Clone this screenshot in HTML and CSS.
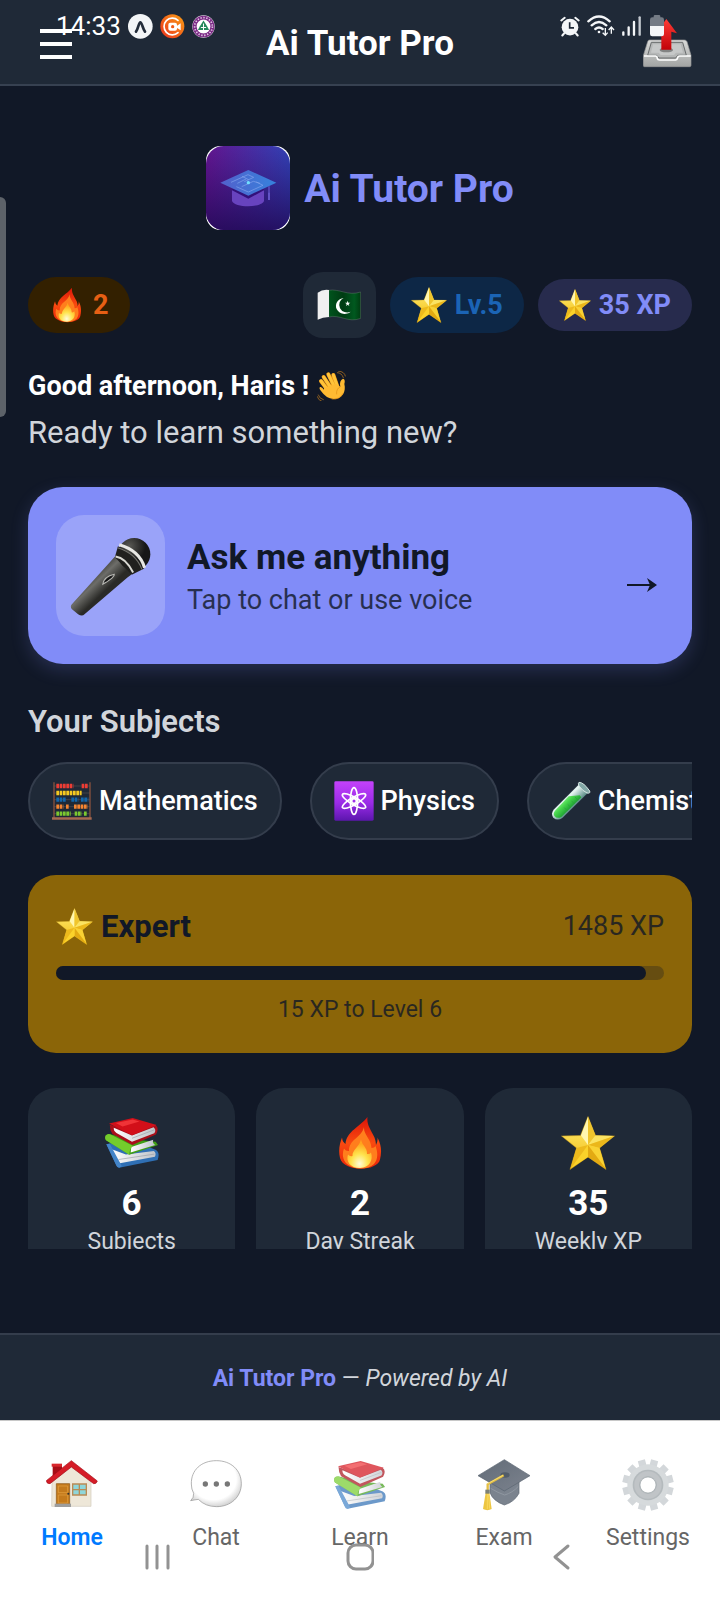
FILE: index.html
```
<!DOCTYPE html>
<html lang="en">
<head>
  <meta charset="UTF-8" />
  <meta name="viewport" content="width=device-width, initial-scale=1.0" />
  <title>Ai Tutor Pro</title>
  <link rel="stylesheet" href="styles.css">
</head>
<body>

  <!-- Shared icons -->
  <svg class="sprite" aria-hidden="true">
    <defs>
      <linearGradient id="gold" x1="0" y1="0" x2="0" y2="1"><stop offset="0" stop-color="#fff07a" /><stop offset="1" stop-color="#f2b90c" /></linearGradient>
      <linearGradient id="flame" x1="0" y1="0" x2="0" y2="1"><stop offset="0" stop-color="#dc1408" /><stop offset=".5" stop-color="#f94a10" /><stop offset="1" stop-color="#e8240a" /></linearGradient>
      <radialGradient id="core" cx=".5" cy=".85" r=".7"><stop offset="0" stop-color="#fffbd8" /><stop offset=".5" stop-color="#ffe34d" /><stop offset="1" stop-color="#ffa61c" /></radialGradient>
      <linearGradient id="page" x1="0" y1="0" x2="1" y2="0"><stop offset="0" stop-color="#ffffff" /><stop offset="1" stop-color="#bfc3c9" /></linearGradient>
    </defs>
    <symbol id="star" viewBox="0 0 108 108">
      <path fill="url(#gold)" stroke="#c4961a" stroke-width="1" d="M54 1 69 39 107 40 77 64 90 107 54 82 18 107 31 64 1 40 39 39z" />
      <path fill="#fff6b0" d="M54 2V58L40 39z" />
      <path fill="#f0c52c" d="M54 2 69 39 54 58z" />
      <path fill="#fbe362" d="M69 39 106 40 54 58z" />
      <path fill="#ebb71a" d="M106 40 77 64 54 58z" />
      <path fill="#f9d233" d="M77 64 89 105 54 58z" />
      <path fill="#e3aa12" d="M89 105 54 82V58z" />
      <path fill="#fbd22a" d="M54 82 19 105 54 58z" />
      <path fill="#edba1c" d="M19 105 31 64 54 58z" />
    </symbol>
    <symbol id="fire" viewBox="0 0 108 108">
      <path fill="url(#flame)" d="M69 2C67 18 76 28 83 43Q86 51 86 58Q90 50 89 43C98 60 97 74 94 87C88 112 21 112 14 84C10 68 14 54 18 43Q19 52 25 56C27 30 54 22 69 2z" />
      <path fill="#ff7e1d" d="M62 22C61 38 76 45 77 64Q83 64 85 60C91 76 89 88 82 96C68 110 36 107 25 93C18 83 19 73 22 65Q26 71 32 70C32 46 57 44 62 22z" />
      <path fill="url(#core)" d="M56 47C58 59 69 63 68 76Q73 77 76 73C81 87 73 104 54 104C35 104 25 91 30 77Q34 82 39 80C38 68 53 61 56 47z" />
    </symbol>
    <symbol id="books" viewBox="0 0 160 156">
      <path fill="#2f6fb4" d="M4 82 68 66 150 98Q164 106 156 128L42 151Q38 151 34 144z" />
      <path fill="url(#page)" d="M18 96 44 138 148 119Q153 109 145 102L62 112z" />
      <path fill="none" stroke="#9aa0a8" stroke-width="2" d="M40 127 146 111" />
      <path fill="#4384c8" d="M4 82 14 80 50 147 42 151Q35 151 33 144z" />
      <path fill="#3f9e15" d="M2 56Q7 50 15 52L80 67 150 74 157 84 72 113 3 70Q-1 64 2 56z" />
      <path fill="url(#page)" d="M78 90 143 68Q139 77 149 84L76 106z" />
      <path fill="#74cc2c" d="M2 56Q7 50 15 52L82 86Q72 98 72 113L3 70Q-2 64 2 56z" />
      <path fill="#a90f1a" d="M14 23 82 47 149 24Q162 34 151 53L81 84 22 51Q14 40 14 23z" />
      <path fill="url(#page)" d="M26 33 80 56 144 31Q153 39 146 49L80 74 34 48Q25 43 26 33z" />
      <path fill="none" stroke="#9da3a9" stroke-width="2" d="M80 64 146 39" />
      <path fill="#d20f19" d="M12 20 82 4 153 25 80 55z" />
      <path fill="#ef3337" d="M32 19 82 8 102 14 52 29z" />
    </symbol>
  </svg>

  <div class="status-bar">
    <div class="status-group">
      <span class="clock">14:33</span>
      <svg width="25" height="25" viewBox="0 0 75 75"><circle cx="37" cy="37" r="37" fill="#f3f5f7" /><path fill="none" stroke="#232c3a" stroke-width="8" stroke-linecap="round" d="M24 53C31 44 32 25 37 25S44 44 51 53" /></svg>
      <svg width="25" height="25" viewBox="0 0 75 75">
        <linearGradient id="rec" x1="1" y1="0" x2="0" y2="1"><stop offset="0" stop-color="#fba015" /><stop offset="1" stop-color="#ea2f1c" /></linearGradient>
        <circle cx="37" cy="37" r="36" fill="url(#rec)" />
        <path fill="none" stroke="#fff" stroke-width="5" stroke-linecap="round" d="M54 19A25 25 0 1 0 54 56" />
        <rect x="25" y="26" width="26" height="24" rx="6" fill="#fff" /><path fill="#fff" d="M50 36 62 28V49L50 41z" /><circle cx="38" cy="38" r="5" fill="#ef5a18" />
      </svg>
      <svg width="23" height="23" viewBox="0 0 70 70">
        <circle cx="35" cy="35" r="34" fill="#f2e8f3" /><circle cx="35" cy="35" r="27" fill="none" stroke="#7c2c86" stroke-width="12" /><circle cx="35" cy="35" r="27" fill="none" stroke="#e6cfe9" stroke-width="5" stroke-dasharray="4 5" />
        <path fill="#fff" d="M15 35a20 20 0 1 1 40 0a20 20 0 1 1-40 0" /><path fill="#24885b" d="M35 17 46 34 52 46H18L24 34z" /><path stroke="#fff" stroke-width="3" d="M35 26V48M27 38H43" />
      </svg>
    </div>
    <div class="status-group status-right">
      <svg width="20" height="21" viewBox="0 0 60 62"><circle cx="30" cy="33" r="25" fill="#f4f6f8" /><path fill="none" stroke="#f4f6f8" stroke-width="6" stroke-linecap="round" d="M4 13 14 5M56 13 46 5M12 52 7 58M48 52 53 58" /><path fill="none" stroke="#1f2937" stroke-width="5" d="M29 18V35H42" /></svg>
      <svg width="28" height="22" viewBox="0 0 84 66">
        <g fill="none" stroke="#f4f6f8" stroke-width="7" stroke-linecap="round"><path d="M4 19Q36-10 68 19M14 31Q36 11 58 31M25 42Q36 33 47 42" /></g>
        <circle cx="36" cy="51" r="4" fill="#f4f6f8" /><path fill="none" stroke="#f4f6f8" stroke-width="4" d="M55 39V60M47 53 55 61 62 53M73 56V37M65 45 73 36 81 45" />
      </svg>
      <svg width="19" height="20" viewBox="0 0 57 60"><path fill="none" stroke="#f4f6f8" stroke-width="7" stroke-linecap="round" d="M4 49V56M20 34V56M36 18V56" /><path fill="none" stroke="#c5cad1" stroke-width="7" stroke-linecap="round" d="M53 4V56" /></svg>
      <svg class="battery" width="14" height="22" viewBox="0 0 42 66"><path fill="#747b85" d="M11 4Q11 0 15 0H27Q31 0 31 4V7H35Q42 7 42 14V34H0V14Q0 7 7 7H11z" /><path fill="#f4f6f8" d="M0 33H42V57Q42 64 35 64H7Q0 64 0 57z" /></svg>
    </div>
  </div>

  <header class="app-header">
    <button class="menu-btn" aria-label="Open menu"><span></span><span></span><span></span></button>
    <h1>Ai Tutor Pro</h1>
    <button class="share-btn" aria-label="Share">
      <svg width="49" height="49" viewBox="0 0 147 147">
        <linearGradient id="tray" x1="0" y1="0" x2="0" y2="1"><stop offset="0" stop-color="#d9dad9" /><stop offset="1" stop-color="#a2a4a3" /></linearGradient>
        <linearGradient id="up" x1="0" y1="0" x2="0" y2="1"><stop offset="0" stop-color="#ff3c35" /><stop offset="1" stop-color="#c20309" /></linearGradient>
        <path fill="url(#tray)" stroke="#999" stroke-width="2" d="M20 63H124Q130 63 132 68L144 109V139Q144 143 140 143H4Q1 143 1 139V110L14 68Q15 63 20 63z" />
        <path fill="#b5b7b7" stroke="#686b6c" stroke-width="3" d="M25 70H119L130 109H104L98 117H48L41 109H14z" />
        <path fill="#d8d9d9" d="M30 76H113L120 101H99L93 108H53L47 101H24z" opacity=".5" />
        <path fill="none" stroke="#fff" stroke-width="5" d="M3 111H38Q43 112 43 119Q44 123 49 123H98Q103 122 104 116Q105 111 110 111H143" />
        <ellipse cx="70" cy="93" rx="20" ry="7" fill="#555" opacity=".6" />
        <path fill="url(#up)" d="M70 0 102 43 85 38V92H55V38L39 43z" />
      </svg>
    </button>
  </header>

  <main class="scroll-area">
    <div class="brand">
      <svg width="84" height="84" viewBox="0 0 252 252">
        <linearGradient id="app" x1="0" y1="0" x2="1" y2="0"><stop offset="0" stop-color="#64158f" /><stop offset="1" stop-color="#3142b5" /></linearGradient>
        <linearGradient id="dark" x1="0" y1="0" x2="0" y2="1"><stop offset="0" stop-color="#260a60" stop-opacity="0" /><stop offset="1" stop-color="#200955" stop-opacity=".85" /></linearGradient>
        <linearGradient id="hat" x1="0" y1="0" x2="1" y2="0"><stop offset="0" stop-color="#5360cc" /><stop offset="1" stop-color="#3682dc" /></linearGradient>
        <rect width="252" height="252" rx="44" fill="#fff" />
        <rect width="252" height="252" rx="53" fill="url(#app)" /><rect width="252" height="252" rx="53" fill="url(#dark)" />
        <path fill="#6843bf" d="M78 129 127 151 174 129V165C166 186 86 186 78 165z" />
        <path fill="#33117a" d="M78 133 127 158 174 133V129H78z" />
        <path fill="url(#hat)" d="M43 110 127 72 211 110 127 149z" />
        <path fill="none" stroke="#83a5ed" stroke-width="2" d="M75 109 126 86 143 94 115 107M94 112 120 99M107 122 142 106 162 112M91 122 127 138 171 118 151 108M108 91 128 101" />
        <circle cx="127" cy="110" r="5" fill="#72dfff" />
        <path fill="none" stroke="#6253c6" stroke-width="4" d="M189 121V158" /><path stroke="#6253c6" stroke-width="6" d="M189 140V162" />
      </svg>
      <h2>Ai Tutor Pro</h2>
    </div>

    <div class="badges">
      <div class="pill streak"><svg width="36" height="36"><use href="#fire" /></svg><span>2</span></div>
      <div class="badges-right">
        <button class="flag-btn" aria-label="Country: Pakistan">
          <svg width="44" height="32" viewBox="0 0 132 96">
            <linearGradient id="cloth" x1="0" y1="0" x2="1" y2="0"><stop offset="0" stop-color="#00541d" /><stop offset=".45" stop-color="#003b13" /><stop offset=".8" stop-color="#00591f" /><stop offset="1" stop-color="#003c11" /></linearGradient>
            <path fill="url(#cloth)" stroke="#849189" stroke-width="1" d="M35 4C66-2 93 22 131 9V88C94 103 69 75 35 84z" />
            <path fill="#f0f0f0" d="M2 11Q17 0 36 3V84Q17 84 2 92z" />
            <path fill="#fff" d="M80 27A26 24 0 1 0 101 68A23 22 0 1 1 80 27z" /><path fill="#fff" d="M92 35 94 41 100 41 95 45 97 51 92 47 87 51 89 45 84 41 90 41z" />
          </svg>
        </button>
        <div class="pill level"><svg width="36" height="36"><use href="#star" /></svg><span>Lv.5</span></div>
        <div class="pill xp"><svg width="32" height="32"><use href="#star" /></svg><span>35 XP</span></div>
      </div>
    </div>

    <p class="greeting">Good afternoon, Haris !
      <svg width="30" height="30" viewBox="0 0 90 90">
        <path fill="none" stroke="#8c5d20" stroke-width="3" stroke-linecap="round" d="M61 5Q74 5 79 20M64 0Q83 2 85 15M4 72Q7 83 19 86M1 77Q4 88 13 90" />
        <g stroke="#e79519" stroke-width="12" stroke-linecap="round"><path d="M12 30 35 61M20 18 43 53M34 10 52 47M49 12 61 46" /></g>
        <g stroke="#ffc339" stroke-width="9" stroke-linecap="round"><path d="M12 30 35 61M20 18 43 53M34 10 52 47M49 12 61 46" /></g>
        <path fill="#ffba32" d="M21 50 57 38 70 47Q66 29 78 23Q86 25 82 39C88 61 76 85 49 84Q28 83 12 60Q5 52 9 48Q14 46 21 56z" /><path fill="none" stroke="#df8c13" stroke-width="2" d="M70 47Q57 54 59 70M44 84Q68 87 78 67" />
      </svg>
    </p>
    <p class="subtitle">Ready to learn something new?</p>

    <button class="ask-card">
      <span class="ask-icon">
        <svg width="81" height="81" viewBox="0 0 240 240">
          <linearGradient id="body" gradientUnits="userSpaceOnUse" x1="66" y1="110" x2="112" y2="158"><stop offset="0" stop-color="#363632" /><stop offset=".45" stop-color="#6d6d69" /><stop offset="1" stop-color="#2a2a27" /></linearGradient>
          <radialGradient id="ball" cx=".35" cy=".25"><stop offset="0" stop-color="#595954" /><stop offset="1" stop-color="#171717" /></radialGradient>
          <path fill="url(#body)" d="M136 61 186 109Q183 119 171 125L43 235Q36 242 24 235L5 219Q0 212 5 206z" />
          <circle cx="190" cy="57" r="48" fill="url(#ball)" />
          <path fill="#20201e" d="M142 33Q180 48 220 99L183 118 133 66z" />
          <path fill="none" stroke="#e8e8e4" stroke-width="9" d="M146 29Q206 46 221 97" /><path fill="none" stroke="#73736e" stroke-width="3" d="M141 38Q196 55 213 102" />
          <path fill="none" stroke="#d8d8d3" stroke-width="6" d="M135 64Q165 68 187 111" />
          <path fill="#222" stroke="#b7b7b2" stroke-width="3" d="M97 146Q100 123 131 116Q134 125 97 146z" /><path fill="none" stroke="#111" stroke-width="3" d="M105 137 122 124" />
        </svg>
      </span>
      <span class="ask-text"><strong>Ask me anything</strong><small>Tap to chat or use voice</small></span>
      <svg class="ask-arrow" width="30" height="16" viewBox="0 0 30 16"><path fill="none" stroke="#111827" stroke-width="2" d="M0 8H26" /><path fill="#111827" d="M20 1 30 8 20 15 23 8z" /></svg>
    </button>

    <h3>Your Subjects</h3>
    <div class="subjects">
      <button class="chip">
        <svg width="40" height="40" viewBox="0 0 120 120">
          <path fill="none" stroke="#87523e" stroke-width="4" d="M6 4V112M114 4V112" /><path fill="#a76950" d="M0 109H119V116H0z" />
          <path stroke="#8c7469" stroke-width="1" d="M7 15H113M7 36H113M7 56H113M7 77H113M7 98H113" />
          <g fill="none" stroke-width="13"><path stroke="#ed3c34" stroke-dasharray="8 2" d="M13 15H64M89 15H109" /><path stroke="#f5c921" stroke-dasharray="8 2" d="M13 36H89" /><path stroke="#1267ac" stroke-dasharray="8 2" d="M13 56H43M58 56H79M87 56H109" /><path stroke="#f58430" stroke-dasharray="8 2" d="M13 77H34M42 77H52M66 77H107" /><path stroke="#7bc92f" stroke-dasharray="8 2" d="M13 98H56M68 98H89M96 98H106" /></g>
        </svg>Mathematics
      </button>
      <button class="chip">
        <svg width="40" height="40" viewBox="0 0 120 120">
          <linearGradient id="violet" x1="0" y1="0" x2="0" y2="1"><stop offset="0" stop-color="#c442fa" /><stop offset=".55" stop-color="#9a2be7" /><stop offset="1" stop-color="#5c16ae" /></linearGradient>
          <rect x="1" y="1" width="118" height="118" rx="4" fill="url(#violet)" />
          <g fill="none" stroke="#fff" stroke-width="5"><ellipse cx="60" cy="60" rx="11" ry="40" /><ellipse cx="60" cy="60" rx="11" ry="40" transform="rotate(60 60 60)" /><ellipse cx="60" cy="60" rx="11" ry="40" transform="rotate(-60 60 60)" /><circle cx="60" cy="60" r="7" /></g>
        </svg>Physics
      </button>
      <button class="chip">
        <svg width="40" height="40" viewBox="0 0 120 120">
          <linearGradient id="glass" gradientUnits="userSpaceOnUse" x1="35" y1="45" x2="68" y2="78"><stop offset="0" stop-color="#a9c7c4" /><stop offset=".3" stop-color="#e9f7f4" /><stop offset="1" stop-color="#5c8d87" /></linearGradient>
          <linearGradient id="juice" gradientUnits="userSpaceOnUse" x1="28" y1="54" x2="58" y2="84"><stop offset="0" stop-color="#9cff9b" /><stop offset=".5" stop-color="#47d64c" /><stop offset="1" stop-color="#1b9f31" /></linearGradient>
          <path fill="url(#glass)" d="M85 9 111 35 34 111Q19 121 7 110Q-2 97 9 85z" />
          <path fill="url(#juice)" d="M53 46 86 43 91 49 31 108Q18 114 11 106Q5 98 12 89z" />
          <path stroke="#2b9f3b" stroke-width="2" d="M72 48 82 58M61 59 71 69M50 70 60 80M40 80 50 90" />
          <path fill="#82a7a5" stroke="#d6e5e3" stroke-width="3" d="M84 4Q98 4 116 30Q119 38 108 36Q95 30 84 15Q80 7 84 4z" />
        </svg>Chemistry
      </button>
    </div>

    <section class="level-card">
      <div class="level-top">
        <strong><svg width="37" height="37"><use href="#star" /></svg>Expert</strong>
        <span>1485 XP</span>
      </div>
      <div class="progress" role="progressbar" aria-label="Level progress" aria-valuenow="97" aria-valuemin="0" aria-valuemax="100"><div class="progress-fill" style="width: 97%"></div></div>
      <p>15 XP to Level 6</p>
    </section>

    <div class="stats">
      <div class="stat"><svg width="54" height="54"><use href="#books" /></svg><strong>6</strong><span>Subjects</span></div>
      <div class="stat"><svg width="54" height="54"><use href="#fire" /></svg><strong>2</strong><span>Day Streak</span></div>
      <div class="stat"><svg width="54" height="54"><use href="#star" /></svg><strong>35</strong><span>Weekly XP</span></div>
    </div>
  </main>
  <div class="scroll-handle"></div>

  <footer><strong>Ai Tutor Pro</strong> — <em>Powered by AI</em></footer>

  <nav class="tabs">
    <a href="#home" class="active">
      <svg width="52" height="52" viewBox="0 0 156 156">
        <path fill="#a70d17" d="M20 18H48V54H20z" /><path fill="#d8272d" d="M17 14H48V23H17z" />
        <path fill="#eee7d8" stroke="#d2cabb" stroke-width="2" d="M18 70 76 22 135 70V142H17z" />
        <path fill="#c47a1c" stroke="#8a5312" stroke-width="2" d="M31 74H71V136H31z" /><path fill="none" stroke="#e5a342" stroke-width="2" d="M37 81H65V101H37zM37 108H65V132H37z" /><circle cx="67" cy="104" r="3" fill="#333" />
        <path fill="#8ed6da" stroke="#b98b54" stroke-width="4" d="M80 75H121V108H80zM100 75V108M80 92H121" />
        <path fill="#9d9d9d" d="M26 134H75V144H26z" />
        <path fill="#d51c27" stroke="#a50d17" stroke-width="2" d="M76 5 154 66Q151 76 143 74L76 24 12 74Q2 75 1 65z" />
      </svg>
      <span>Home</span>
    </a>
    <a href="#chat">
      <svg width="52" height="52" viewBox="0 0 156 156">
        <radialGradient id="bubble" cx=".45" cy=".4" r=".6"><stop offset=".75" stop-color="#fff" /><stop offset="1" stop-color="#d5d5d5" /></radialGradient>
        <path fill="url(#bubble)" stroke="#8f8f8f" stroke-width="2" d="M4 75C3 33 34 5 79 5S154 34 154 74S122 143 80 143Q46 143 25 121Q17 122 2 125Q12 116 11 103Q4 91 4 75z" />
        <g fill="#777"><circle cx="46" cy="75" r="8" /><circle cx="79" cy="75" r="8" /><circle cx="112" cy="75" r="8" /></g>
      </svg>
      <span>Chat</span>
    </a>
    <a href="#learn"><svg class="faded" width="52" height="52"><use href="#books" /></svg><span>Learn</span></a>
    <a href="#exam">
      <svg width="52" height="52" viewBox="0 0 156 156">
        <linearGradient id="cap" x1="0" y1="0" x2="1" y2="1"><stop offset="0" stop-color="#626b77" /><stop offset="1" stop-color="#7c838e" /></linearGradient>
        <path fill="#7b838e" stroke="#5b6470" stroke-width="2" d="M36 64 80 87 123 64V103Q109 129 79 138Q45 126 36 101z" />
        <path fill="none" stroke="#98a0a9" stroke-width="2" d="M38 88Q61 102 80 108Q104 101 121 82" />
        <path fill="url(#cap)" stroke="#596370" stroke-width="2" d="M0 50 79 2 156 50 79 96z" />
        <ellipse cx="81" cy="48" rx="14" ry="8" fill="#515c69" />
        <path fill="none" stroke="#e3bd43" stroke-width="7" d="M77 49 29 76V101" /><path fill="none" stroke="#ffed8a" stroke-width="2" d="M75 49 29 74" />
        <path fill="#edc642" d="M23 101H34L41 150Q28 157 15 150z" /><path fill="#7d8177" d="M22 92H35V104H22z" /><path stroke="#ffe36c" stroke-width="2" d="M28 105V150M32 105 35 149" />
      </svg>
      <span>Exam</span>
    </a>
    <a href="#settings">
      <svg width="52" height="52" viewBox="0 0 156 156">
        <g stroke="#d3d7da" stroke-width="22"><path d="M78 1V155M1 78H155" transform="rotate(15 78 78)" /><path d="M78 1V155M1 78H155" transform="rotate(45 78 78)" /><path d="M78 1V155M1 78H155" transform="rotate(75 78 78)" /></g>
        <circle cx="78" cy="78" r="62" fill="#d6dadc" /><circle cx="78" cy="78" r="46" fill="#b4babd" /><circle cx="78" cy="78" r="34" fill="none" stroke="#c0c4c7" stroke-width="14" /><circle cx="78" cy="78" r="24" fill="#fff" stroke="#9fa6ab" stroke-width="2" />
      </svg>
      <span>Settings</span>
    </a>
  </nav>

  <div class="system-nav">
    <button aria-label="Recent apps"><svg width="28" height="28" viewBox="0 0 28 28"><path stroke="#929292" stroke-width="3" stroke-linecap="round" d="M4 3V25M14 3V25M25 3V25" /></svg></button>
    <button aria-label="Home screen"><svg width="28" height="28" viewBox="0 0 28 28"><rect x="2" y="2" width="25" height="24" rx="8" fill="none" stroke="#929292" stroke-width="3" /></svg></button>
    <button aria-label="Back"><svg width="28" height="28" viewBox="0 0 28 28"><path fill="none" stroke="#929292" stroke-width="3" stroke-linecap="round" stroke-linejoin="round" d="M19 3 6 14 19 25" /></svg></button>
  </div>

</body>
</html>
```
FILE: styles.css
```
* {
  box-sizing: border-box;
}

body {
  font-family: Roboto, sans-serif;
  background-color: #111827;
  color: #fff;
  margin: 0;
  height: 100vh;
  display: flex;
  flex-direction: column;
  position: relative;
}

h1, h2, h3, p {
  margin: 0;
}

button {
  font-family: inherit;
  color: inherit;
  background: none;
  border: none;
  padding: 0;
  cursor: pointer;
}

svg {
  display: block;
  flex-shrink: 0;
}

.sprite {
  position: absolute;
  width: 0;
  height: 0;
}

/* Phone status bar, drawn over the header */
.status-bar {
  position: absolute;
  top: 0;
  left: 0;
  right: 0;
  height: 52px;
  padding: 0 56px;
  display: flex;
  justify-content: space-between;
  align-items: center;
  pointer-events: none;
  z-index: 2;
}

.status-group {
  display: flex;
  align-items: center;
  gap: 7px;
}

.clock {
  font-size: 26px;
}

.battery {
  margin-left: 2px;
}

.app-header {
  height: 86px;
  flex-shrink: 0;
  padding: 3px 28px 0;
  display: flex;
  justify-content: space-between;
  align-items: center;
  background-color: #1f2937;
  border-bottom: 2px solid #374151;
}

.app-header h1 {
  font-size: 35px;
  font-weight: 700;
}

.menu-btn,
.share-btn {
  width: 56px;
  height: 56px;
  display: flex;
}

.menu-btn {
  padding: 0 12px;
  flex-direction: column;
  justify-content: center;
  gap: 9px;
}

.menu-btn span {
  height: 4px;
  background-color: #fff;
}

.share-btn {
  justify-content: flex-end;
  align-items: center;
}

.scroll-area {
  flex: 1;
  min-height: 0;
  overflow-y: auto;
  scrollbar-width: none;
  padding: 60px 28px 0;
  margin-bottom: 84px;
}

.scroll-handle {
  position: absolute;
  left: 0;
  top: 197px;
  width: 6px;
  height: 220px;
  background-color: #5d6269;
  border-radius: 0 6px 6px 0;
}

.brand {
  display: flex;
  justify-content: center;
  align-items: center;
  gap: 14px;
  margin-bottom: 42px;
}

.brand h2 {
  font-size: 39px;
  line-height: 50px;
  padding-top: 2px;
  color: #818cf8;
}

.badges,
.badges-right {
  display: flex;
  align-items: center;
  justify-content: space-between;
}

.badges-right {
  gap: 14px;
}

.pill {
  display: flex;
  align-items: center;
  height: 56px;
  padding: 0 21px;
  gap: 8px;
  border-radius: 28px;
  font-size: 27px;
  font-weight: 700;
}

.streak {
  background-color: #332000;
  color: #e65f14;
}

.level {
  background-color: #0d2746;
  color: #1b64b5;
}

.xp {
  height: 52px;
  background-color: #272b4d;
  color: #818cf8;
}

.flag-btn {
  width: 73px;
  height: 66px;
  display: flex;
  align-items: center;
  justify-content: center;
  background-color: #1f2937;
  border-radius: 20px;
}

.greeting {
  display: flex;
  align-items: center;
  gap: 8px;
  margin-top: 30px;
  font-size: 27px;
  line-height: 36px;
  font-weight: 700;
}

.subtitle {
  margin: 8px 0 33px;
  font-size: 31px;
  line-height: 42px;
  color: #d1d5db;
}

.ask-card {
  width: 100%;
  display: flex;
  align-items: center;
  padding: 28px;
  background-color: #818cf8;
  color: #111827;
  border-radius: 35px;
  box-shadow: 0 6px 18px rgba(129, 140, 248, 0.2);
  text-align: left;
}

.ask-icon {
  height: 121px;
  padding: 0 14px;
  display: flex;
  align-items: center;
  background-color: rgba(255, 255, 255, 0.2);
  border-radius: 28px;
}

.ask-text {
  flex: 1;
  margin-left: 22px;
  padding-top: 4px;
  display: flex;
  flex-direction: column;
}

.ask-text strong {
  font-size: 35px;
  line-height: 44px;
}

.ask-text small {
  font-size: 27px;
  line-height: 40px;
  opacity: 0.8;
}

.ask-arrow {
  margin: 18px 7px 0 0;
}

h3 {
  margin: 38px 0 20px;
  font-size: 31px;
  line-height: 40px;
  font-weight: 600;
  color: #d1d5db;
}

.subjects {
  display: flex;
  gap: 28px;
  overflow-x: auto;
  scrollbar-width: none;
  margin-bottom: 35px;
}

.chip {
  display: flex;
  flex-shrink: 0;
  align-items: center;
  gap: 7px;
  height: 78px;
  padding: 0 22px;
  background-color: #1f2937;
  border: 2px solid #343d4c;
  border-radius: 39px;
  font-size: 27px;
  font-weight: 500;
}

.level-card {
  padding: 28px;
  margin-bottom: 35px;
  background-color: #8b6508;
  color: #111827;
  border-radius: 28px;
}

.level-top {
  display: flex;
  align-items: center;
  justify-content: space-between;
  height: 46px;
  font-size: 27px;
}

.level-top strong {
  display: flex;
  align-items: center;
  gap: 8px;
  font-size: 31px;
}

.level-top span,
.level-card p {
  opacity: 0.8;
}

.progress {
  height: 14px;
  margin: 17px 0 15px;
  background-color: rgba(17, 24, 39, 0.3);
  border-radius: 7px;
}

.progress-fill {
  height: 14px;
  background-color: #111827;
  border-radius: 7px;
}

.level-card p {
  font-size: 23px;
  line-height: 30px;
  text-align: center;
}

.stats {
  display: grid;
  grid-template-columns: repeat(3, 1fr);
  gap: 21px;
}

.stat {
  display: flex;
  flex-direction: column;
  align-items: center;
  padding: 28px 14px;
  background-color: #1f2937;
  border-radius: 28px;
}

.stat strong {
  margin-top: 12px;
  font-size: 35px;
  line-height: 44px;
}

.stat span {
  font-size: 23px;
  line-height: 32px;
  color: #d1d5db;
}

footer {
  height: 87px;
  flex-shrink: 0;
  border-top: 2px solid #343d4c;
  background-color: #1f2937;
  color: #d1d5db;
  font-size: 23px;
  line-height: 88px;
  text-align: center;
}

footer strong {
  color: #818cf8;
}

.tabs {
  display: flex;
  flex-shrink: 0;
  padding: 38px 0 47px;
  background-color: #fff;
  border-top: 1px solid #c8c8c8;
}

.tabs a {
  flex: 1;
  display: flex;
  flex-direction: column;
  align-items: center;
  gap: 12px;
  color: #666;
  font-size: 23px;
  line-height: 30px;
  text-decoration: none;
}

.tabs .active {
  color: #007aff;
  font-weight: 600;
}

.faded {
  opacity: 0.7;
}

/* Android buttons, over the tab bar */
.system-nav {
  position: absolute;
  left: 0;
  right: 0;
  bottom: 29px;
  padding: 0 56px;
  display: grid;
  grid-template-columns: repeat(3, 1fr);
  justify-items: center;
}
```
